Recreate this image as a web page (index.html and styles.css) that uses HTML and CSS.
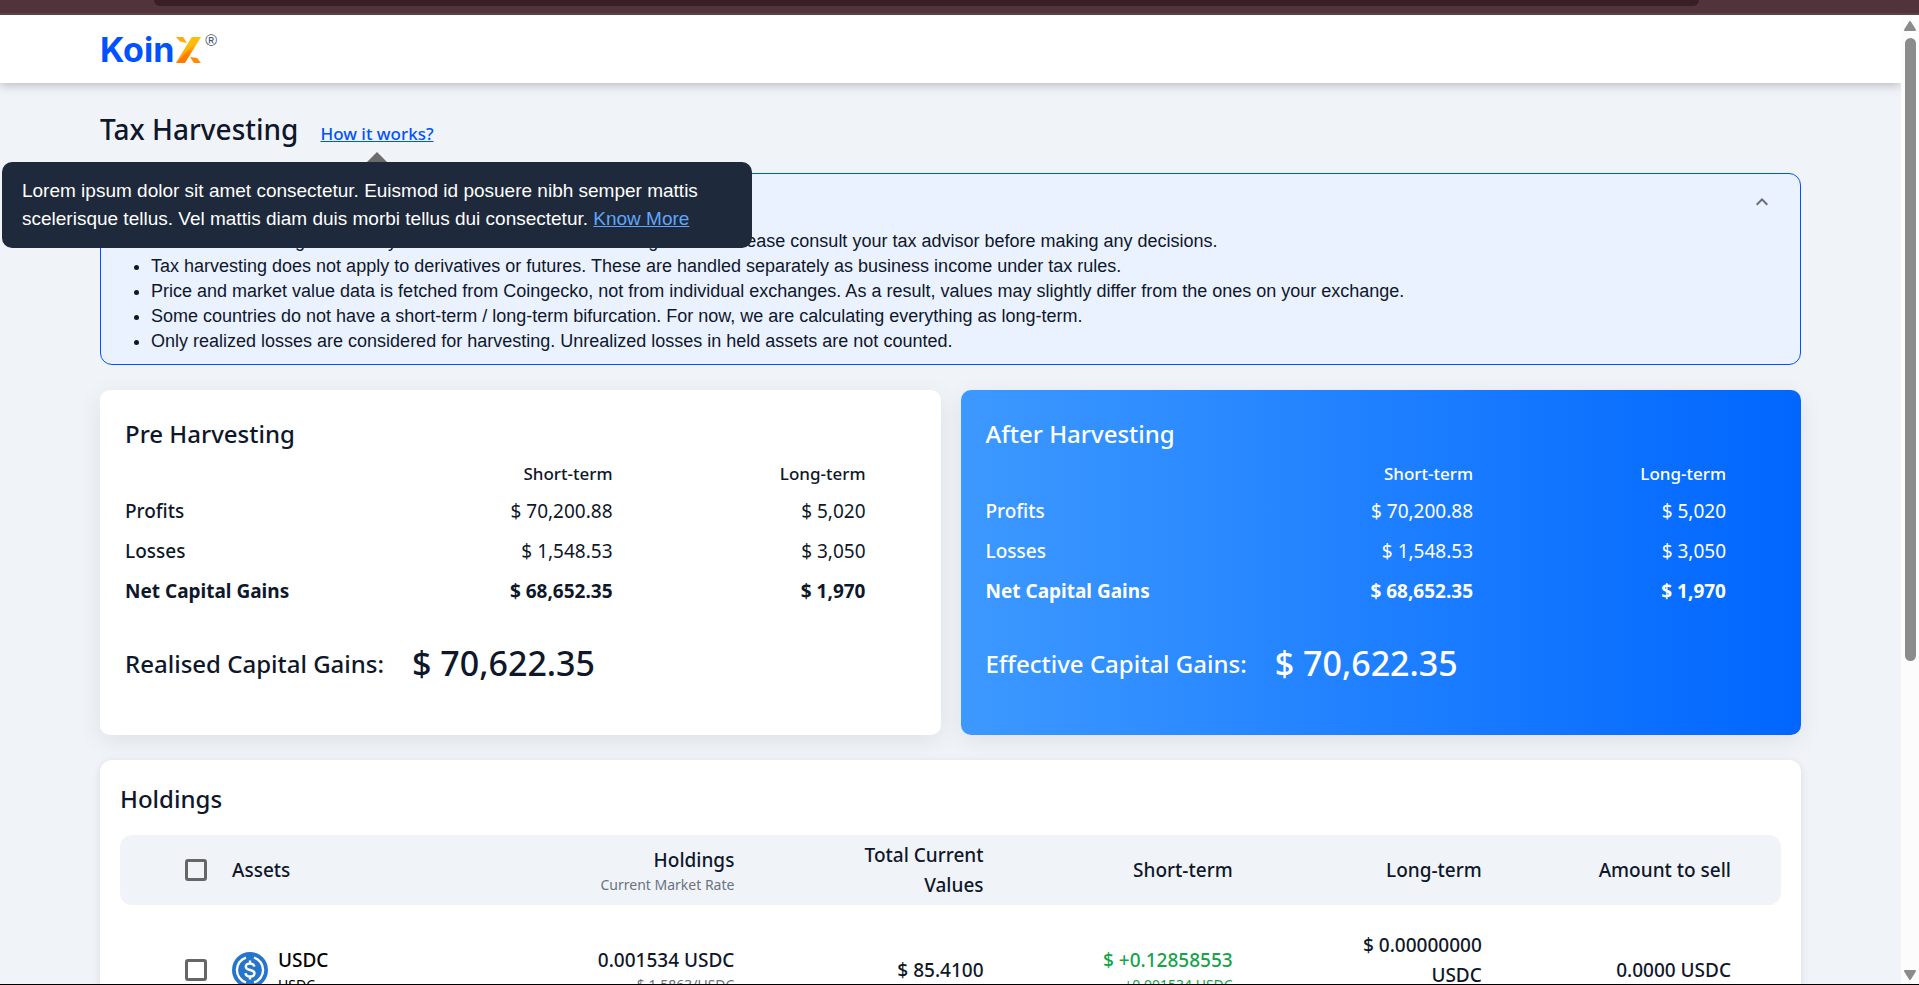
FILE: index.html
```html
<!DOCTYPE html>
<html lang="en">
<head>
<meta charset="utf-8">
<title>Tax Harvesting</title>
<link rel="stylesheet" href="styles.css">
</head>
<body>
<div class="browser-edge"><div class="address-bar"></div></div>
<div class="viewport">
  <div class="page">
    <header class="site-header">
      <div class="logo">
        <span class="logo-word">Koin</span>
        <svg class="logo-x" viewBox="0 0 25 26" aria-hidden="true">
          <defs>
            <linearGradient id="sun" x1="0" y1="0" x2="0" y2="1">
              <stop offset="0.3" stop-color="#ffb80a"/>
              <stop offset="0.7" stop-color="#ff7a00"/>
            </linearGradient>
          </defs>
          <path d="M16 0H25L9 26H0Z" fill="url(#sun)"/>
          <path d="M16 0H25L0 26Z" fill="#ffbe0a" opacity=".7"/>
          <path d="M0 0H7L11 6L4 4.500Z" fill="#ffab0a"/>
          <path d="M14 20L21 21L25 26H18Z" fill="#ff8a00"/>
        </svg>
        <span class="logo-mark">®</span>
      </div>
    </header>
    <main class="content">
      <div class="title-row">
        <h1>Tax Harvesting</h1>
        <div class="help">
          <a class="help-link" href="#how">How it works?</a>
          <div class="tooltip" role="tooltip">Lorem ipsum dolor sit amet consectetur. Euismod id posuere nibh semper mattis scelerisque tellus. Vel mattis diam duis morbi tellus dui consectetur. <a href="#more">Know More</a></div>
        </div>
      </div>

      <section class="notes">
        <div class="notes-head">
          <button class="collapse" type="button" aria-label="Collapse notes">
            <svg viewBox="0 0 24 24" aria-hidden="true"><path d="M12 8l-6 6 1.41 1.41L12 10.83l4.59 4.58L18 14z"/></svg>
          </button>
        </div>
        <ul>
          <li>Tax-loss harvesting is currently not allowed under Indian tax regulations. Please consult your tax advisor before making any decisions.</li>
          <li>Tax harvesting does not apply to derivatives or futures. These are handled separately as business income under tax rules.</li>
          <li>Price and market value data is fetched from Coingecko, not from individual exchanges. As a result, values may slightly differ from the ones on your exchange.</li>
          <li>Some countries do not have a short-term / long-term bifurcation. For now, we are calculating everything as long-term.</li>
          <li>Only realized losses are considered for harvesting. Unrealized losses in held assets are not counted.</li>
        </ul>
      </section>

      <div class="cards">
        <section class="card">
          <h2>Pre Harvesting</h2>
          <table class="gains">
            <thead><tr><td></td><th scope="col">Short-term</th><th scope="col">Long-term</th></tr></thead>
            <tbody>
              <tr><th scope="row">Profits</th><td>$ 70,200.88</td><td>$ 5,020</td></tr>
              <tr><th scope="row">Losses</th><td>$ 1,548.53</td><td>$ 3,050</td></tr>
              <tr class="net"><th scope="row">Net Capital Gains</th><td>$ 68,652.35</td><td>$ 1,970</td></tr>
            </tbody>
          </table>
          <p class="total"><span>Realised Capital Gains:</span><strong>$ 70,622.35</strong></p>
        </section>
        <section class="card card-after">
          <h2>After Harvesting</h2>
          <table class="gains">
            <thead><tr><td></td><th scope="col">Short-term</th><th scope="col">Long-term</th></tr></thead>
            <tbody>
              <tr><th scope="row">Profits</th><td>$ 70,200.88</td><td>$ 5,020</td></tr>
              <tr><th scope="row">Losses</th><td>$ 1,548.53</td><td>$ 3,050</td></tr>
              <tr class="net"><th scope="row">Net Capital Gains</th><td>$ 68,652.35</td><td>$ 1,970</td></tr>
            </tbody>
          </table>
          <p class="total"><span>Effective Capital Gains:</span><strong>$ 70,622.35</strong></p>
        </section>
      </div>

      <section class="holdings">
        <h2>Holdings</h2>
        <table class="assets">
          <thead>
            <tr>
              <th scope="col"><label class="pick"><input type="checkbox">Assets</label></th>
              <th scope="col">Holdings<small>Current Market Rate</small></th>
              <th scope="col">Total Current Values</th>
              <th scope="col">Short-term</th>
              <th scope="col">Long-term</th>
              <th scope="col">Amount to sell</th>
            </tr>
          </thead>
          <tbody>
            <tr>
              <td>
                <label class="pick"><input type="checkbox">
                  <svg class="coin" viewBox="0 0 36 36" aria-hidden="true">
                    <circle cx="18" cy="18" r="18" fill="#2775ca"/>
                    <g fill="none" stroke="#fff" stroke-width="2.4">
                      <path d="M14 5.6a13 13 0 0 0 0 24.8M22 5.6a13 13 0 0 1 0 24.8"/>
                      <path d="M22.3 14.6c-.3-2-1.900-3-4.300-3-2.500 0-4.200 1.200-4.200 3.100 0 4.600 8.700 2 8.700 6.600 0 2-1.800 3.200-4.400 3.200-2.700 0-4.400-1.200-4.600-3.400M18 8.500v3M18 24.500v3"/>
                    </g>
                  </svg>
                  <span class="asset-name">USDC<small>USDC</small></span>
                </label>
              </td>
              <td>0.001534 USDC<small>$ 1.5863/USDC</small></td>
              <td>$ 85.4100</td>
              <td class="gain">$ +0.12858553<small>+0.001534 USDC</small></td>
              <td>$ 0.00000000 USDC<small>&nbsp;</small></td>
              <td>0.0000 USDC</td>
            </tr>
          </tbody>
        </table>
      </section>
    </main>
  </div>
  <div class="scrollbar" aria-hidden="true">
    <svg viewBox="0 0 12 10"><path d="M6 1L11 9H1Z"/></svg>
    <div class="thumb"></div>
    <svg viewBox="0 0 12 10"><path d="M6 9L11 1H1Z"/></svg>
  </div>
</div>
</body>
</html>
```
FILE: styles.css
```css
* { box-sizing: border-box; }

body {
  margin: 0;
  height: 100vh;
  display: flex;
  flex-direction: column;
  overflow: hidden;
  border-bottom: 1px solid #000;
  background: #f0f4f9;
  color: #0f172a;
  font-family: "Noto Sans", "Open Sans", sans-serif;
}

h1, h2, p, ul { margin: 0; }
h1, h2 { font-weight: 500; }
table { width: 100%; border-collapse: collapse; table-layout: fixed; }
small { display: block; }

.browser-edge {
  flex: none;
  height: 15px;
  padding: 0 220px 0 154px;
  background: #503439;
  border-bottom: 2px solid #5b4349;
}
.address-bar {
  height: 6px;
  background: #381f25;
  border-radius: 0 0 14px 14px;
}

.viewport { flex: 1; min-height: 0; display: flex; }
.page { flex: 1; min-width: 0; overflow: hidden; }

.scrollbar {
  flex: none;
  width: 18px;
  padding: 6px 3px 4px;
  display: flex;
  flex-direction: column;
  align-items: center;
  gap: 7px;
  background: #fcfcfc;
}
.scrollbar svg { width: 12px; height: 10px; fill: #8b8b8b; stroke: #8b8b8b; stroke-width: 2; stroke-linejoin: round; }
.thumb { width: 11px; height: 65%; margin-bottom: auto; border-radius: 6px; background: #8b8b8b; }

.site-header {
  height: 68px;
  padding: 2px 100px 0;
  display: flex;
  align-items: center;
  background: #fff;
  box-shadow: 0 2px 10px rgba(0, 0, 0, .25);
}
.logo { display: flex; align-items: center; gap: 2px; color: #0052fe; }
.logo-word { font: 700 34px/40px Inter, sans-serif; }
.logo-x { width: 25px; height: 26px; }
.logo-mark { align-self: flex-start; margin-left: 2px; font: 400 16px/22px "Liberation Sans", sans-serif; color: #44546f; }

.content { padding: 25px 100px; display: flex; flex-direction: column; }

.title-row { display: flex; align-items: baseline; gap: 22px; margin-bottom: 23px; }
.title-row h1 { font-size: 28px; line-height: 42px; }
.help { position: relative; }
.help-link { color: #0052fe; font-size: 17px; font-weight: 500; }

.tooltip {
  position: absolute;
  top: 40px;
  left: 50%;
  z-index: 2;
  width: 750px;
  margin-left: -375px;
  padding: 15px 50px 15px 20px;
  border-radius: 10px;
  background: #1e293b;
  color: #fff;
  font: 19px/28px "Liberation Sans", sans-serif;
}
.tooltip::before {
  content: "";
  position: absolute;
  bottom: 100%;
  left: 50%;
  margin-left: -10px;
  border: 10px solid transparent;
  border-top: 0;
  border-bottom-color: #6b6b6b;
}
.tooltip a { color: #60a5fa; }

.notes {
  margin-bottom: 25px;
  padding-bottom: 10px;
  border: 1px solid #0052fe;
  border-radius: 12px;
  background: #eaf2ff;
  font: 18px/25px "Liberation Sans", sans-serif;
}
.notes-head { height: 55px; padding: 0 26px; display: flex; align-items: center; justify-content: flex-end; }
.notes ul { padding-left: 50px; }
.collapse { width: 24px; height: 24px; padding: 0; border: 0; background: none; }
.collapse svg { display: block; width: 24px; height: 24px; fill: #666b75; }

.cards { display: flex; gap: 20px; margin-bottom: 25px; }
.card {
  flex: 1;
  padding: 25px 25px 42px;
  border-radius: 10px;
  background: #fff;
  box-shadow: 0 6px 24px rgba(0, 0, 0, .08);
}
.card-after { background: linear-gradient(90deg, #3d99ff, #0066ff); color: #fff; }
.card h2 { margin-bottom: 4px; font-size: 24px; line-height: 38px; }

.gains td, .gains th { height: 40px; padding: 0 50px 0 0; text-align: right; font-size: 19px; line-height: 26px; }
.gains tr > :nth-child(2), .gains tr > :nth-child(3) { width: 32%; }
.gains thead td, .gains thead th { height: 34px; font-size: 17px; font-weight: 500; }
.gains tbody th { padding: 0; text-align: left; font-weight: 500; }
.gains tbody .net > * { font-weight: 700; }

.total { display: flex; align-items: center; gap: 28px; height: 60px; margin-top: 22px; font-size: 24px; font-weight: 500; }
.total strong { font-size: 34px; font-weight: 500; }

.holdings {
  padding: 20px;
  border-radius: 12px;
  background: #fff;
  box-shadow: 0 2px 8px rgba(0, 0, 0, .1);
}
.holdings h2 { font-size: 24px; line-height: 38px; margin-bottom: 17px; }

.assets th, .assets td { width: 15%; padding: 25px 50px; text-align: right; font-size: 19px; font-weight: 500; line-height: 30px; }
.assets th:first-child, .assets td:first-child { width: 25%; text-align: left; }
.assets th { padding-top: 5px; padding-bottom: 5px; background: #f0f4f9; }
.assets th:first-child { border-radius: 12px 0 0 12px; }
.assets th:last-child { border-radius: 0 12px 12px 0; }
.assets small { font-size: 14px; font-weight: 400; line-height: 20px; color: #6b7280; }
.assets .gain, .assets .gain small { color: #16a34a; }

.pick { display: flex; align-items: center; gap: 25px; }
.pick input {
  appearance: none;
  flex: none;
  width: 22px;
  height: 22px;
  margin: 0 0 0 15px;
  border: 3px solid #666;
  border-radius: 3px;
}
.coin { flex: none; width: 36px; height: 36px; }
.asset-name { margin-left: -15px; color: #000; }
.assets .asset-name small { color: #000; }
```
